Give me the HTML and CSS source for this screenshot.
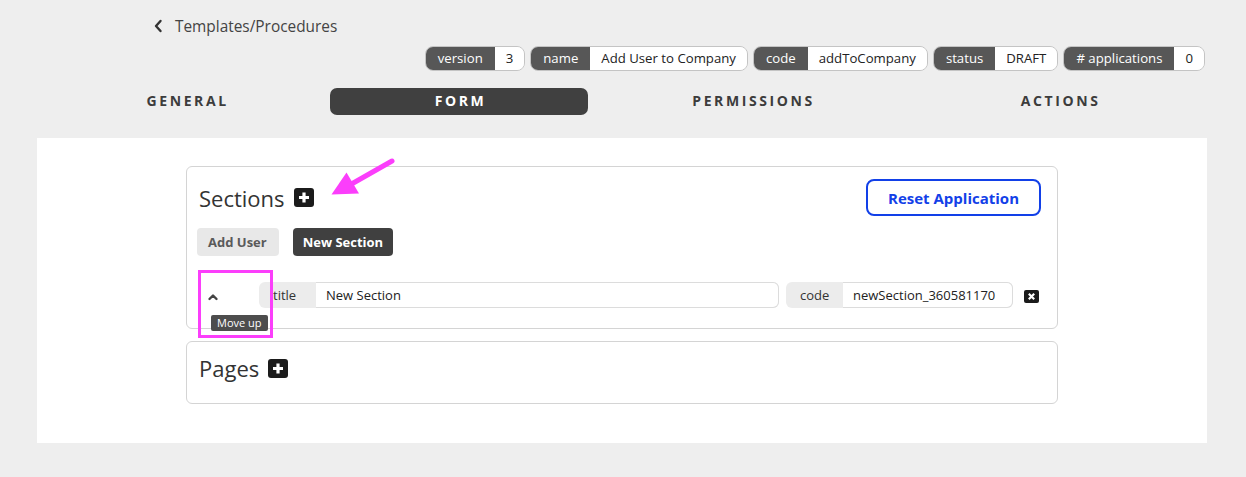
FILE: index.html
```html
<!DOCTYPE html>
<html>
<head>
<meta charset="utf-8">
<link rel="stylesheet" href="styles.css">
</head>
<body>
<div class="top">
  <div class="breadcrumb">
    <svg class="back" width="10" height="14" viewBox="0 0 10 14"><path d="M7.5 2 L3 7 L7.5 12" fill="none" stroke="#333" stroke-width="2.4" stroke-linecap="round" stroke-linejoin="round"/></svg>
    <span>Templates/Procedures</span>
  </div>
  <div class="chips">
    <div class="chip"><span class="chip-label">version</span><span class="chip-value">3</span></div>
    <div class="chip"><span class="chip-label">name</span><span class="chip-value">Add User to Company</span></div>
    <div class="chip"><span class="chip-label">code</span><span class="chip-value">addToCompany</span></div>
    <div class="chip"><span class="chip-label">status</span><span class="chip-value">DRAFT</span></div>
    <div class="chip"><span class="chip-label"># applications</span><span class="chip-value">0</span></div>
  </div>
  <div class="tabs">
    <div class="tab">GENERAL</div>
    <div class="tab active">FORM</div>
    <div class="tab">PERMISSIONS</div>
    <div class="tab">ACTIONS</div>
  </div>
</div>
<div class="panel">
  <div class="card sections">
    <div class="card-head">
      <div class="title-wrap">
        <span class="card-title">Sections</span>
        <svg class="plus" width="20" height="19" viewBox="0 0 20 19"><rect x="0" y="0" width="20" height="19" rx="3" fill="#1b1b1b"/><path d="M10 4.5 V14.5 M5 9.5 H15" stroke="#fff" stroke-width="3.2"/></svg>
      </div>
      <button class="btn-reset">Reset Application</button>
    </div>
    <div class="btn-row">
      <button class="btn btn-light">Add User</button>
      <button class="btn btn-dark">New Section</button>
    </div>
    <div class="field-row">
      <div class="move">
        <svg width="12" height="8" viewBox="0 0 12 8"><path d="M2.5 6 L6 2.5 L9.5 6" fill="none" stroke="#444" stroke-width="2.4" stroke-linecap="round" stroke-linejoin="round"/></svg>
        <span class="tooltip">Move up</span>
      </div>
      <div class="group grow">
        <span class="group-label">title</span>
        <span class="group-input">New Section</span>
      </div>
      <div class="group code">
        <span class="group-label">code</span>
        <span class="group-input">newSection_360581170</span>
      </div>
      <svg class="del" width="15" height="13" viewBox="0 0 15 13"><rect width="15" height="13" rx="2" fill="#1b1b1b"/><path d="M4.8 3.8 L10.2 9.2 M10.2 3.8 L4.8 9.2" stroke="#fff" stroke-width="2.2"/></svg>
    </div>
  </div>
  <div class="card pages">
    <div class="title-wrap">
      <span class="card-title">Pages</span>
      <svg class="plus" width="20" height="19" viewBox="0 0 20 19"><rect x="0" y="0" width="20" height="19" rx="3" fill="#1b1b1b"/><path d="M10 4.5 V14.5 M5 9.5 H15" stroke="#fff" stroke-width="3.2"/></svg>
    </div>
  </div>
</div>
<div class="annot-rect"></div>
<svg class="annot-arrow" width="75" height="45" viewBox="325 155 75 45">
  <path d="M392 161 L348 186" stroke="#fb3efb" stroke-width="5" stroke-linecap="round"/>
  <path d="M331.5 194.5 L346.5 172.5 L359 193.5 Z" fill="#fb3efb"/>
</svg>
</body>
</html>
```
FILE: styles.css
```css
* { box-sizing: border-box; }
html, body { margin: 0; padding: 0; }
body {
  background: #eeeeee;
  font-family: "Open Sans", "Noto Sans", sans-serif;
  color: #333;
  width: 1246px;
  height: 477px;
  position: relative;
  overflow: hidden;
}
.top {
  padding: 16px 39px 0 37px;
}
.breadcrumb {
  display: flex;
  align-items: center;
  height: 20px;
  margin-left: 116px;
  font-size: 15.4px;
  color: #444;
}
.back { margin-right: 12px; }
.chips {
  display: flex;
  justify-content: flex-end;
  gap: 5px;
  margin-top: 10px;
  margin-right: 2px;
  height: 25px;
}
.chip {
  display: flex;
  border: 1px solid #c4c4c4;
  border-radius: 8px;
  overflow: hidden;
  font-size: 13.2px;
  line-height: 23px;
}
.chip-label {
  background: #575757;
  color: #fff;
  padding: 0 12px;
}
.chip-value {
  background: #fff;
  color: #222;
  padding: 0 11px;
}
.tabs {
  display: flex;
  margin: 17px 5px 0 5px;
  height: 27px;
}
.tab {
  flex: 1 1 auto;
  text-align: center;
  font-size: 14px;
  font-weight: 700;
  letter-spacing: 2.6px;
  line-height: 25px;
  height: 27px;
  color: #3c3c3c;
  border-radius: 7px;
  padding-left: 3px;
}
.tab.active {
  background: #404040;
  color: #fff;
}
.panel {
  margin: 23px 39px 0 37px;
  background: #fff;
  height: 305px;
  padding-top: 28px;
  display: flex;
  flex-direction: column;
  align-items: center;
  gap: 12px;
}
.card {
  width: 872px;
  border: 1px solid #d4d4d4;
  border-radius: 6px;
  background: #fff;
}
.sections { padding: 12px 16px 20px 10px; }
.card-head {
  display: flex;
  justify-content: space-between;
  align-items: center;
}
.title-wrap {
  display: flex;
  align-items: center;
  gap: 9px;
  padding-left: 2px;
}
.card-title {
  font-size: 22px;
  line-height: 30px;
  color: #333;
}
.btn-reset {
  font-family: inherit;
  height: 37px;
  width: 175px;
  border: 2px solid #1240e8;
  border-radius: 8px;
  background: #fff;
  color: #1240e8;
  font-size: 15px;
  font-weight: 700;
  padding: 0;
}
.btn-row {
  display: flex;
  gap: 14px;
  margin-top: 12px;
}
.btn {
  font-family: inherit;
  height: 28px;
  border: none;
  border-radius: 4px;
  font-size: 13px;
  font-weight: 700;
  padding: 0 12px;
  white-space: nowrap;
}
.btn-light { background: #e8e8e8; color: #5a5a5a; padding: 0 12px 0 11px; }
.btn-dark { background: #404040; color: #fff; padding: 0 10px; }
.field-row {
  display: flex;
  align-items: center;
  margin-top: 26px;
  height: 26px;
}
.move {
  width: 62px;
  position: relative;
  display: flex;
  padding-left: 10px;
  padding-top: 3px;
}
.tooltip {
  position: absolute;
  left: 14px;
  top: 25px;
  background: #4d4d4d;
  color: #fff;
  font-size: 11px;
  line-height: 16px;
  padding: 0 6px;
  border-radius: 2px;
  white-space: nowrap;
}
.group {
  display: flex;
  height: 26px;
  border-radius: 6px;
  background: #ececec;
  font-size: 13px;
  line-height: 24px;
}
.group.grow { flex: 1 1 auto; }
.group.code { margin-left: 7px; }
.group-label {
  width: 57px;
  padding: 1px 0 0 14px;
  color: #333;
}
.group-input {
  flex: 1 1 auto;
  background: #fff;
  border: 1px solid #dcdcdc;
  border-left: none;
  border-radius: 0 6px 6px 0;
  padding: 0 10px;
  color: #222;
}
.group.code .group-input { width: 170px; flex: none; }
.del { margin: 3px 2px 0 11px; }
.pages {
  padding: 11px 10px 20px 10px;
}
.annot-rect {
  position: absolute;
  left: 198px;
  top: 270px;
  width: 75px;
  height: 68px;
  border: 3px solid #fb3efb;
}
.annot-arrow {
  position: absolute;
  left: 325px;
  top: 155px;
}
```
